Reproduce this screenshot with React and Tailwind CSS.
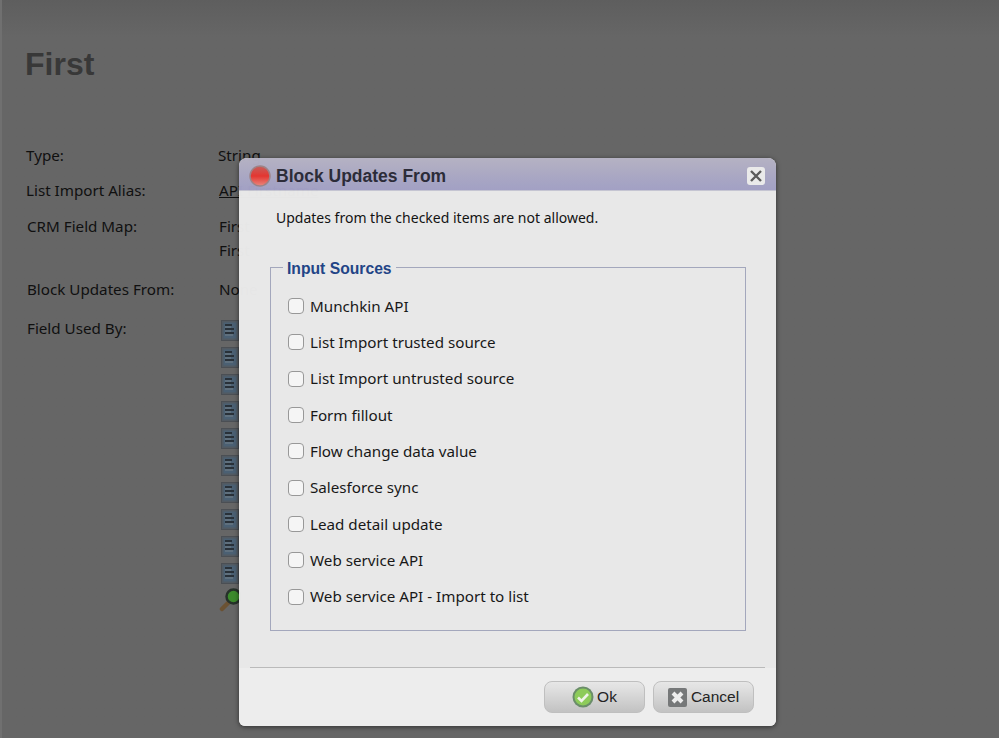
// App.jsx
const fuentes = [
  "Munchkin API",
  "List Import trusted source",
  "List Import untrusted source",
  "Form fillout",
  "Flow change data value",
  "Salesforce sync",
  "Lead detail update",
  "Web service API",
  "Web service API - Import to list",
];

function ListIcon() {
  return (
    <svg width="18" height="21" viewBox="0 0 18 21" className="block">
      <rect x="0.5" y="0.5" width="17" height="20" fill="#525a62" stroke="#4b4f54" />
      <rect x="2.5" y="2.5" width="13" height="16" fill="#4b6073" />
      <path d="M4 5h7M4 9h9M4 13h9" stroke="#1f2227" strokeWidth="1.4" />
      <path d="M4 7h6M4 11h6M4 15h8" stroke="#75808a" strokeWidth="1" />
    </svg>
  );
}

function Magnifier() {
  return (
    <svg width="22" height="24" viewBox="0 0 22 24" className="block">
      <path d="M9 15L3 21" stroke="#6b5233" strokeWidth="4.5" strokeLinecap="round" />
      <circle cx="14.5" cy="8.5" r="7" fill="#3c8a2c" stroke="#26312a" strokeWidth="2.5" />
    </svg>
  );
}

function RedDot() {
  return (
    <svg width="22" height="22" viewBox="0 0 22 22" className="block">
      <defs>
        <linearGradient id="rojo" x1="0" y1="0" x2="0" y2="1">
          <stop offset="0" stopColor="#c9605c" />
          <stop offset="0.5" stopColor="#e8352f" />
          <stop offset="1" stopColor="#ee8a80" />
        </linearGradient>
      </defs>
      <circle cx="11" cy="11" r="10" fill="url(#rojo)" stroke="#a08488" strokeWidth="1.5" />
    </svg>
  );
}

function OkIcon() {
  return (
    <svg width="22" height="22" viewBox="0 0 22 22" className="block">
      <circle cx="11" cy="11" r="10.5" fill="#6b8f6a" />
      <circle cx="11" cy="11" r="8.5" fill="#8fcf5a" />
      <path d="M6 11.5l3.5 3.5L16 8" fill="none" stroke="#f4f8ee" strokeWidth="2.6" />
    </svg>
  );
}

function CancelIcon() {
  return (
    <svg width="19" height="19" viewBox="0 0 19 19" className="block">
      <rect width="19" height="19" rx="2" fill="#77797a" />
      <path d="M5 5l9 9M14 5l-9 9" stroke="#f2f2f2" strokeWidth="4" />
    </svg>
  );
}

export default function App() {
  const sans = "font-['Noto_Sans','DejaVu_Sans',sans-serif]";
  return (
    <div className={`relative w-[999px] h-[738px] overflow-hidden bg-[#666666] text-[#101010] text-[15.2px] ${sans}`}>
      {/* Pagina de fondo, oscurecida */}
      <div className="h-[738px] border-l-2 border-[#707070] bg-gradient-to-b from-[#5e5e5e] to-[#666666] to-[5%] pl-6 pt-[42px]">
        <h1 className="-ml-px font-['Liberation_Sans',sans-serif] font-bold text-[32px] leading-[44px] text-[#383838]">First</h1>
        <div className="mt-[59px] grid grid-cols-[192px_1fr] auto-rows-min leading-5">
          <div className="h-[35px]">Type:</div>
          <div className="h-[35px]">String</div>
          <div className="h-[36px]">List Import Alias:</div>
          <div className="h-[36px] pl-px"><span className="underline">API Firstname</span></div>
          <div className="h-[63px] pl-px">CRM Field Map:</div>
          <div className="h-[63px] pl-px leading-6 -mt-[2px]"><div>First</div><div>First</div></div>
          <div className="h-[39px] pl-px">Block Updates From:</div>
          <div className="h-[39px] pl-px">None</div>
          <div className="pl-px">Field Used By:</div>
          <div className="flex flex-col gap-[6px] pt-[2px] pl-[3px]">
            {Array.from({ length: 10 }).map((_, i) => <ListIcon key={i} />)}
            <div className="-mt-[2px] -ml-[2px]"><Magnifier /></div>
          </div>
        </div>
      </div>

      {/* Dialogo */}
      <div className="absolute left-[239px] top-[158px] w-[537px] h-[568px] rounded-t-lg rounded-b-md bg-[#ededed] opacity-[0.97] shadow-[0_1px_5px_rgba(0,0,0,0.55)] flex flex-col overflow-hidden">
        <div className="h-[33px] flex items-center bg-gradient-to-b from-[#b8b5c6] to-[#a4a2c8] pt-[3px] pl-[10px] pr-[11px] border-b border-[#c9c9d6]">
          <RedDot />
          <span className="ml-[5px] pt-[2px] font-['Liberation_Sans',sans-serif] font-bold text-[17.5px] text-[#2b2b38]">Block Updates From</span>
          <button className="ml-auto w-[18px] h-[18px] rounded-[3px] bg-[#efefef] flex items-center justify-center">
            <svg width="14" height="14" viewBox="0 0 14 14"><path d="M2 2l10 10M12 2L2 12" stroke="#5b5b5b" strokeWidth="2.4" /></svg>
          </button>
        </div>

        <p className="mt-[17px] ml-[37px] leading-5 text-[#111111] text-[14px]">Updates from the checked items are not allowed.</p>

        <fieldset className="mt-[29px] ml-[31px] w-[476px] h-[374px] border border-[#a5aabf] pl-[17px]">
          <legend className="-ml-[5px] px-[4px] pt-[4px] font-['Liberation_Sans',sans-serif] font-bold text-[15.7px] leading-4 text-[#1e4488]">Input Sources</legend>
          <div className="mt-[11px] flex flex-col">
            {fuentes.map((f) => (
              <label key={f} className="h-[36.3px] flex items-center gap-[6px] text-[#161616] text-[15.2px]">
                <span className="w-[16px] h-[16px] rounded-[4px] border border-[#9a9a9a] bg-[#fafafa]" />
                {f}
              </label>
            ))}
          </div>
        </fieldset>

        <div className="mt-auto mx-[11px] border-t border-[#bdbdbd]" />
        <div className="h-[58px] bg-[#f2f2f2] flex items-start justify-end gap-[8px] pt-[13px] pr-[22px]">
          <button className="w-[101px] h-[32px] rounded-lg border border-[#c2c2c2] bg-gradient-to-b from-[#ececec] to-[#c6c6c6] flex items-center justify-center gap-[3px] font-['Liberation_Sans',sans-serif] text-[15.5px] text-[#222222]">
            <OkIcon /> Ok
          </button>
          <button className="w-[101px] h-[32px] rounded-lg border border-[#c2c2c2] bg-gradient-to-b from-[#ececec] to-[#c6c6c6] flex items-center justify-center gap-[4px] font-['Liberation_Sans',sans-serif] text-[15.5px] text-[#222222]">
            <CancelIcon /> Cancel
          </button>
        </div>
      </div>
    </div>
  );
}
